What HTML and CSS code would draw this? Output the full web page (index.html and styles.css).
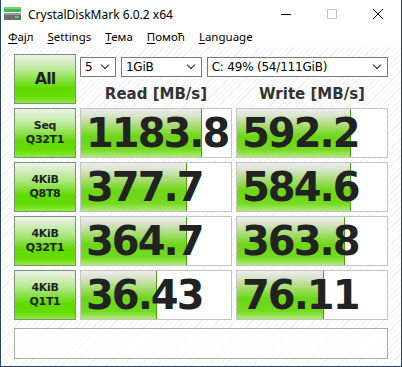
FILE: index.html
```html
<!DOCTYPE html>
<html lang="sr">
<head>
    <meta charset="UTF-8">
    <title>CrystalDiskMark 6.0.2 x64</title>
    <link rel="stylesheet" href="styles.css">
</head>
<body>
    <div class="window">
        <div class="titlebar">
            <svg class="app-icon" width="17" height="13" viewBox="0 0 17 13">
                <rect x="0" y="0" width="17" height="5" fill="#3cb94a"/>
                <rect x="0" y="0" width="17" height="2" fill="#6fd57a"/>
                <rect x="0" y="6" width="17" height="7" fill="#6c6c6c"/>
                <rect x="0" y="6" width="17" height="2" fill="#9a9a9a"/>
                <rect x="11" y="9" width="4" height="2" fill="#4ad04a"/>
            </svg>
            <span class="title">CrystalDiskMark 6.0.2 x64</span>
            <div class="caption-buttons">
                <span class="cap-btn">
                    <svg width="10" height="10" viewBox="0 0 10 10"><line x1="0" y1="5.5" x2="10" y2="5.5" stroke="#000" stroke-width="1"/></svg>
                </span>
                <span class="cap-btn">
                    <svg width="10" height="10" viewBox="0 0 10 10"><rect x="0.5" y="0.5" width="9" height="9" fill="none" stroke="#c6c6c6" stroke-width="1"/></svg>
                </span>
                <span class="cap-btn">
                    <svg width="10" height="10" viewBox="0 0 10 10"><path d="M0 0 L10 10 M10 0 L0 10" stroke="#000" stroke-width="1"/></svg>
                </span>
            </div>
        </div>

        <div class="menubar">
            <span class="menu-item"><u>Ф</u>ајл</span>
            <span class="menu-item"><u>S</u>ettings</span>
            <span class="menu-item"><u>Т</u>ема</span>
            <span class="menu-item"><u>П</u>омоћ</span>
            <span class="menu-item"><u>L</u>anguage</span>
        </div>

        <div class="main">
            <div class="grid">
                <div class="btn btn-all">All</div>
                <div class="head">
                    <div class="combos">
                        <div class="combo combo-count">5<span class="chev"></span></div>
                        <div class="combo combo-size">1GiB<span class="chev"></span></div>
                        <div class="combo combo-drive">C: 49% (54/111GiB)<span class="chev"></span></div>
                    </div>
                    <div class="labels">
                        <div class="label">Read [MB/s]</div>
                        <div class="label">Write [MB/s]</div>
                    </div>
                </div>

                <div class="btn">Seq<br>Q32T1</div>
                <div class="result"><div class="bar" style="width: 80%"></div><span class="value">1183.8</span></div>
                <div class="result"><div class="bar" style="width: 75%"></div><span class="value">592.2</span></div>

                <div class="btn">4KiB<br>Q8T8</div>
                <div class="result"><div class="bar" style="width: 70%"></div><span class="value">377.7</span></div>
                <div class="result"><div class="bar" style="width: 75%"></div><span class="value">584.6</span></div>

                <div class="btn">4KiB<br>Q32T1</div>
                <div class="result"><div class="bar" style="width: 70%"></div><span class="value">364.7</span></div>
                <div class="result"><div class="bar" style="width: 71%"></div><span class="value">363.8</span></div>

                <div class="btn">4KiB<br>Q1T1</div>
                <div class="result"><div class="bar" style="width: 50%"></div><span class="value">36.43</span></div>
                <div class="result"><div class="bar" style="width: 57%"></div><span class="value">76.11</span></div>
            </div>

            <div class="comment"></div>
        </div>
    </div>
</body>
</html>
```

FILE: styles.css
```css
html, body {
    margin: 0;
    padding: 0;
}
body {
    font-family: "Noto Sans", sans-serif;
    width: 402px;
    height: 367px;
    overflow: hidden;
}
.window {
    box-sizing: border-box;
    width: 402px;
    height: 367px;
    border: 1px solid #24456a;
    border-top: none;
    display: flex;
    flex-direction: column;
    background: #fff;
}
.titlebar {
    height: 30px;
    display: flex;
    align-items: center;
    background: #fff;
}
.app-icon {
    margin-left: 3px;
    margin-right: 7px;
    margin-top: -3px;
}
.title {
    font-size: 12px;
    color: #000;
    margin-top: -2px;
}
.caption-buttons {
    margin-left: auto;
    display: flex;
    height: 30px;
}
.cap-btn {
    width: 46px;
    display: flex;
    align-items: center;
    justify-content: center;
    margin-top: -2px;
}
.menubar {
    height: 17px;
    display: flex;
    align-items: flex-start;
    background: #fff;
}
.menu-item {
    font-size: 11.5px;
    line-height: 14px;
    padding: 0 7px;
    color: #000;
}
.menu-item u {
    text-decoration-thickness: 1px;
    text-underline-offset: 2px;
}
.main {
    flex: 1;
    padding: 7px 0 0 13px;
    background: repeating-linear-gradient(135deg, #ffffff 0px, #ffffff 3px, #f2f2f2 3px, #f2f2f2 4px);
}
.grid {
    display: grid;
    grid-template-columns: 62px 152px 152px;
    grid-auto-rows: 50px;
    column-gap: 4px;
    row-gap: 4px;
}
.btn {
    box-sizing: border-box;
    border: 1px solid #78957a;
    background: linear-gradient(to bottom, #eef2ec 0%, #b2e888 35%, #5fda00 68%, #66dc06 86%, #90ea44 100%);
    display: flex;
    align-items: center;
    justify-content: center;
    text-align: center;
    font-family: "DejaVu Sans", sans-serif;
    font-weight: bold;
    font-size: 11px;
    line-height: 14px;
    letter-spacing: -0.3px;
    color: #222;
}
.btn-all {
    font-size: 16px;
    letter-spacing: -1px;
}
.head {
    grid-column: 2 / 4;
    display: flex;
    flex-direction: column;
}
.combos {
    display: flex;
    gap: 5px;
    margin-top: 3px;
}
.combo {
    box-sizing: border-box;
    height: 20px;
    border: 1px solid #7a7a7a;
    background: #fff;
    font-family: "DejaVu Sans", sans-serif;
    font-size: 12px;
    letter-spacing: -0.2px;
    display: flex;
    align-items: center;
    padding-left: 4px;
    position: relative;
}
.combo-count {
    width: 36px;
}
.combo-size {
    width: 81px;
}
.combo-drive {
    width: 182px;
}
.chev {
    position: absolute;
    right: 7px;
    top: 4px;
    width: 5px;
    height: 5px;
    border-right: 1.5px solid #222;
    border-bottom: 1.5px solid #222;
    transform: rotate(45deg);
}
.labels {
    display: flex;
    gap: 4px;
    margin-top: auto;
    margin-bottom: 1px;
}
.label {
    width: 152px;
    text-align: center;
    font-family: "DejaVu Sans", sans-serif;
    font-weight: bold;
    font-size: 15px;
    color: #333;
}
.result {
    box-sizing: border-box;
    border: 1px solid #c4c4c4;
    background: #fff;
    position: relative;
    display: flex;
    align-items: center;
    overflow: hidden;
}
.bar {
    position: absolute;
    left: 0;
    top: 0;
    bottom: 0;
    background: linear-gradient(to bottom, #ececec 0%, #dce5d3 12%, #a6dc6e 36%, #6cd616 58%, #74da20 84%, #b0ea78 100%);
    border-right: 1px solid #45a014;
}
.value {
    position: relative;
    font-family: "DejaVu Sans", sans-serif;
    font-weight: bold;
    font-size: 40px;
    letter-spacing: -2px;
    color: #222;
    padding-left: 5px;
    line-height: 1;
}
.comment {
    box-sizing: border-box;
    width: 374px;
    height: 31px;
    margin-top: 8px;
    border: 1px solid #ababab;
    background: rgba(255, 255, 255, 0.6);
}
```
